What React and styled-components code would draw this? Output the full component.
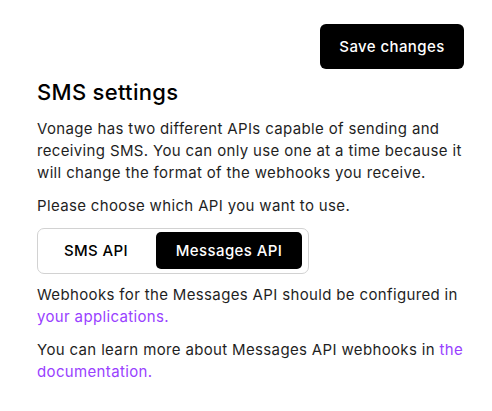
import { useState } from "react";
import styled, { createGlobalStyle } from "styled-components";

const GlobalStyle = createGlobalStyle`
    * {
        box-sizing: border-box;
    }
    html,
    body {
        margin: 0;
        background: #ffffff;
        font-family: Inter, "Noto Sans", sans-serif;
        color: #1a1a1a;
        -webkit-font-smoothing: antialiased;
    }
`;

const apis = ["SMS API", "Messages API"];

const App = () => {
    const [api, setApi] = useState("Messages API");

    return (
        <>
            <GlobalStyle />
            <PageStyles>
                <Toolbar>
                    <SaveButton type="button">Save changes</SaveButton>
                </Toolbar>
                <Title>SMS settings</Title>
                <Text>
                    Vonage has two different APIs capable of sending and receiving SMS.
                    You can only use one at a time because it will change the format of
                    the webhooks you receive.
                </Text>
                <Text>Please choose which API you want to use.</Text>
                <Toggle>
                    {apis.map((item) => (
                        <ToggleButton
                            key={item}
                            type="button"
                            $active={api === item}
                            onClick={() => setApi(item)}
                        >
                            {item}
                        </ToggleButton>
                    ))}
                </Toggle>
                <Text>
                    Webhooks for the Messages API should be configured in{" "}
                    <Link href="#">your applications.</Link>
                </Text>
                <Text>
                    You can learn more about Messages API webhooks in{" "}
                    <Link href="#">the documentation.</Link>
                </Text>
            </PageStyles>
        </>
    );
};

const PageStyles = styled.div`
    width: 492px;
    padding: 24px 28px 0 37px;
    display: flex;
    flex-direction: column;
    align-items: flex-start;
`;

const Toolbar = styled.div`
    width: 100%;
    display: flex;
    justify-content: flex-end;
`;

const SaveButton = styled.button`
    height: 45px;
    width: 144px;
    padding: 0;
    border: none;
    border-radius: 6px;
    background: #000000;
    color: #ffffff;
    font-family: inherit;
    font-size: 15px;
    font-weight: 500;
    letter-spacing: 0.4px;
    cursor: pointer;
`;

const Title = styled.h2`
    margin: 9px 0 12px;
    font-size: 22px;
    line-height: 28px;
    font-weight: 500;
    letter-spacing: 0.3px;
    color: #000000;
`;

const Text = styled.p`
    margin: 0 0 11px;
    font-size: 15px;
    line-height: 22px;
    letter-spacing: 0.35px;
    color: #1f1f1f;
`;

const Link = styled.a`
    color: #9941ff;
    text-decoration: none;
`;

const Toggle = styled.div`
    display: flex;
    gap: 6px;
    width: 272px;
    height: 46px;
    padding: 3px 6px 4px 4px;
    margin: 0 0 10px;
    border: 1px solid #d2d2d2;
    border-radius: 7px;
`;

const ToggleButton = styled.button`
    flex: ${({ $active }) => ($active ? "0 0 146px" : "1 1 auto")};
    border: none;
    border-radius: 5px;
    background: ${({ $active }) => ($active ? "#000000" : "transparent")};
    color: ${({ $active }) => ($active ? "#ffffff" : "#000000")};
    font-family: inherit;
    font-size: 15px;
    font-weight: 500;
    letter-spacing: 0.4px;
    cursor: pointer;
`;

export default App;
